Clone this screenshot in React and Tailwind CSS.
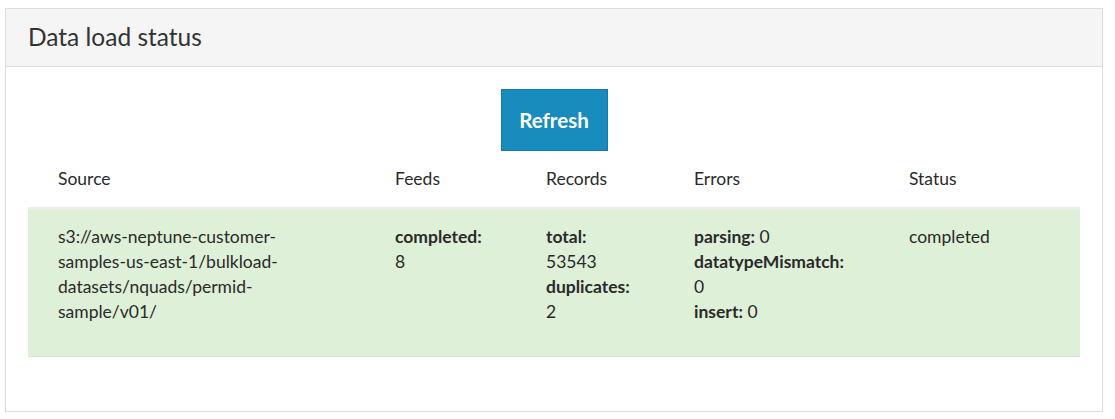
import React from "react";

const rows = [
  {
    source: ["s3://aws-neptune-customer-", "samples-us-east-1/bulkload-", "datasets/nquads/permid-", "sample/v01/"],
    feeds: [["completed:", null], ["8", "v"]],
    records: [["total:", null], ["53543", "v"], ["duplicates:", null], ["2", "v"]],
    errors: [["parsing:", "0"], ["datatypeMismatch:", null], ["0", "v"], ["insert:", "0"]],
    status: "completed",
  },
];

function Lines({ items }) {
  return (
    <div>
      {items.map(([label, val], i) =>
        val === "v" ? (
          <div key={i}>{label}</div>
        ) : (
          <div key={i}>
            <span className="font-bold">{label}</span>
            {val !== null && <span> {val}</span>}
          </div>
        )
      )}
    </div>
  );
}

export default function App() {
  return (
    <div
      className="pt-[8px] pl-[5px] bg-white text-[#2a2a2a]"
      style={{ fontFamily: "Lato, 'Liberation Sans', sans-serif" }}
    >
      <div className="w-[1098px] h-[404px] border border-[#ddd] bg-white">
        <div className="h-[58px] bg-[#f5f5f5] border-b border-[#ddd] px-[22px] flex items-center">
          <h2 className="text-[24.5px] font-normal text-[#333]">Data load status</h2>
        </div>

        <div className="pl-[22px] pr-[22px]">
          <div className="flex justify-center pt-[22px]">
            <button className="w-[107px] h-[62px] bg-[#188cbc] border border-[#1479a5] text-white text-[20.5px] font-bold">
              Refresh
            </button>
          </div>

          <div className="grid grid-cols-[337px_151px_148px_215px_1fr] pl-[30px] h-[56px] items-center text-[17.5px]">
            <div>Source</div>
            <div>Feeds</div>
            <div>Records</div>
            <div>Errors</div>
            <div>Status</div>
          </div>

          {rows.map((r, i) => (
            <div
              key={i}
              className="grid grid-cols-[337px_151px_148px_215px_1fr] pl-[30px] pt-[14px] h-[150px] bg-[#dff0d8] border-t-[3px] border-t-[#ececec] border-b border-b-[#ddd] text-[17.5px] leading-[25px]"
            >
              <div>
                {r.source.map((s, j) => (
                  <div key={j}>{s}</div>
                ))}
              </div>
              <Lines items={r.feeds} />
              <Lines items={r.records} />
              <Lines items={r.errors} />
              <div>{r.status}</div>
            </div>
          ))}
        </div>
      </div>
    </div>
  );
}
